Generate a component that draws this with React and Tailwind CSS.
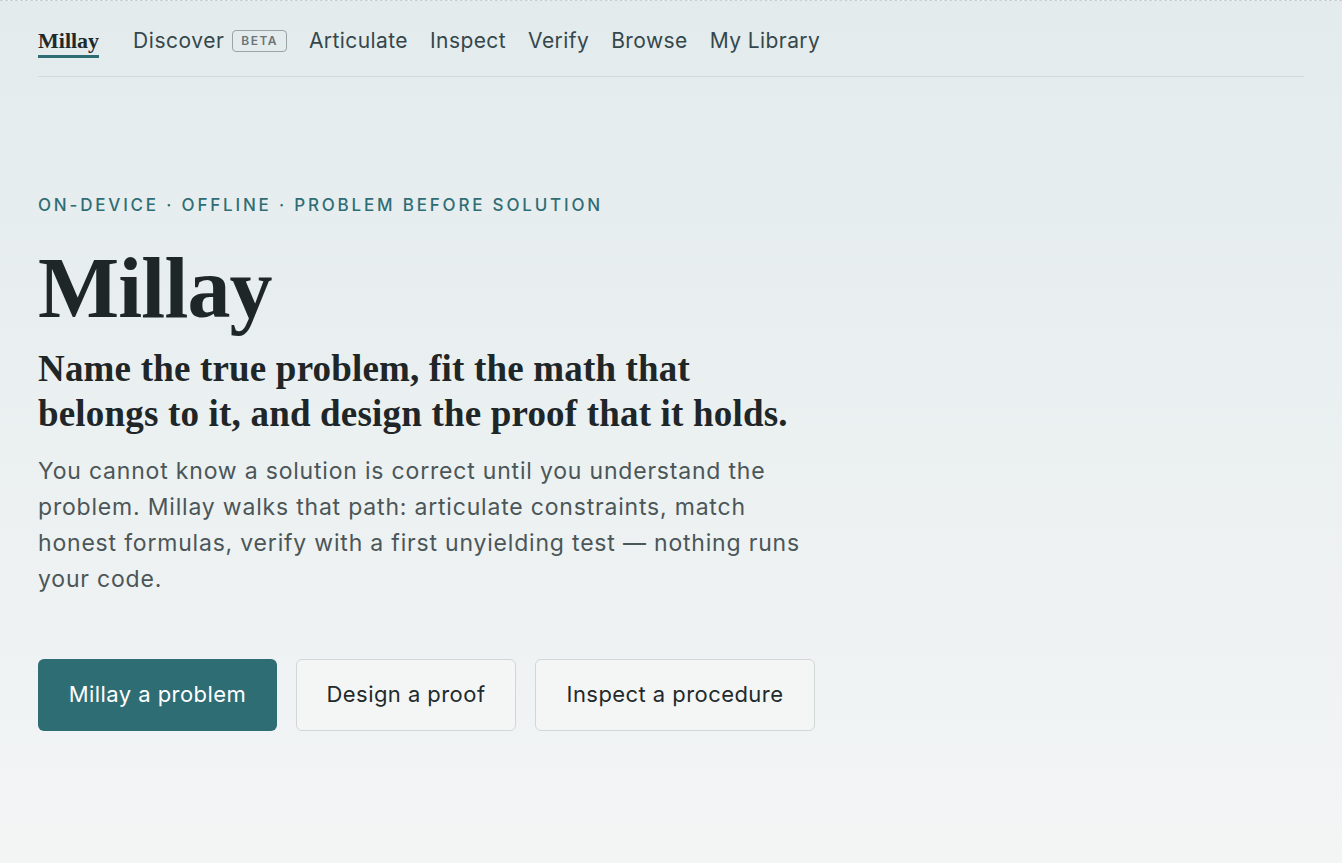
import React from "react";

const sans = "font-['Inter','Noto_Sans',sans-serif]";
const serif = "font-['Liberation_Serif','DejaVu_Serif',serif]";

const navItems = ["Articulate", "Inspect", "Verify", "Browse", "My Library"];

const Nav = () => {
  return (
    <nav className="flex items-end h-[76px] border-b border-[#d3dadc]">
      <div className="flex items-center gap-[22px] pb-[19px]">
        <div className="relative">
          <span className={`${serif} text-[22px] font-bold text-[#1f2a2c]`}>Millay</span>
          <div className="absolute left-0 right-0 -bottom-[1px] h-[3px] bg-[#2f6d75]" />
        </div>
        <div className="flex items-center gap-[8px] ml-[12px]">
          <span className={`${sans} text-[21px] tracking-[0.025em] text-[#35474b]`}>Discover</span>
          <span className={`${sans} text-[12px] font-semibold tracking-[0.12em] text-[#6b7476] border border-[#9aa3a5] rounded-[4px] px-[8px] py-[1px]`}>
            BETA
          </span>
        </div>
        {navItems.map((item) => (
          <span key={item} className={`${sans} text-[21px] tracking-[0.02em] text-[#35474b]`}>
            {item}
          </span>
        ))}
      </div>
    </nav>
  );
};

const App = () => {
  return (
    <div className="min-h-[863px] bg-gradient-to-b from-[#e3ebed] to-[#f3f5f5] border-t border-dashed border-[#c9d1d3]">
      <div className="px-[38px]">
        <Nav />
        <main className="pt-[116px] max-w-[800px]">
          <p className={`${sans} text-[17px] font-medium tracking-[0.165em] text-[#2f6d75]`}>
            ON-DEVICE · OFFLINE · PROBLEM BEFORE SOLUTION
          </p>
          <h1 className={`${serif} text-[86px] font-bold leading-none text-[#1e2628] mt-[26px] tracking-[-0.01em]`}>
            Millay
          </h1>
          <h2 className={`${serif} text-[37px] font-bold leading-[45px] text-[#1e2628] mt-[15px] tracking-[0.005em]`}>
            Name the true problem, fit the math that
            <br />
            belongs to it, and design the proof that it holds.
          </h2>
          <p className={`${sans} text-[23px] leading-[36px] tracking-[0.035em] text-[#4b5658] mt-[17px] max-w-[765px]`}>
            You cannot know a solution is correct until you understand the problem. Millay walks that path: articulate
            constraints, match honest formulas, verify with a first unyielding test — nothing runs your code.
          </p>
          <div className="flex gap-[19px] mt-[62px]">
            <button className={`${sans} h-[72px] w-[239px] rounded-[6px] bg-[#2f6d75] text-white text-[22px] tracking-[0.02em]`}>
              Millay a problem
            </button>
            <button className={`${sans} h-[72px] w-[220px] rounded-[6px] border border-[#cfd7d9] bg-[#f4f6f6] text-[#1f2a2c] text-[22px] tracking-[0.02em]`}>
              Design a proof
            </button>
            <button className={`${sans} h-[72px] w-[280px] rounded-[6px] border border-[#cfd7d9] bg-[#f4f6f6] text-[#1f2a2c] text-[22px] tracking-[0.02em]`}>
              Inspect a procedure
            </button>
          </div>
        </main>
      </div>
    </div>
  );
};

export default App;
